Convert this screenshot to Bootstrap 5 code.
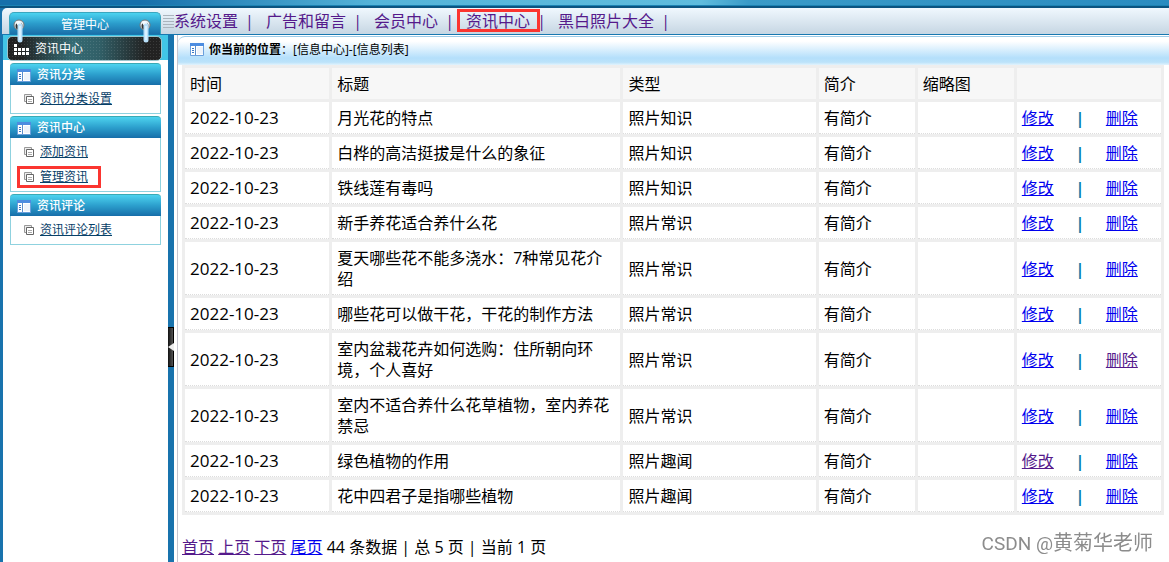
<!DOCTYPE html>
<html lang="zh-CN">
<head>
<meta charset="utf-8">
<meta name="viewport" content="width=device-width, initial-scale=1">
<title>管理中心</title>
<link href="https://cdn.jsdelivr.net/npm/bootstrap@5.3.0/dist/css/bootstrap.min.css" rel="stylesheet">
<style>
body{font-family:"Open Sans","Noto Sans CJK SC",sans-serif;font-size:16px;line-height:21px;color:#000;background:#1873ad}
a{color:#00e}
a.seen{color:#551a8b}
.top-strip{height:8px;background:linear-gradient(#0000 5px,#1c83b3 5px,#1c83b3 6px,#0b5480 6px),linear-gradient(90deg,#1670ab 12%,#55b4d9 32%,#5fbcdd 60%,#3a9bc8 64%,#2a8cc0)}
.main-nav{height:27px;margin-left:2px;background:linear-gradient(#f0f8fe,#c6d6e3);border-bottom:1px solid #1878b0;border-top-left-radius:5px}
.side-title{width:152px;height:22px;margin:4px 0 0 7px;line-height:24px;font-size:12px;color:#fff;background:linear-gradient(#4bd3f0,#2b9ccb 50%,#1a70aa);border:1px solid #3aa6bf;border-bottom:0;border-radius:5px 5px 0 0}
.stripes{width:11px;height:13px;margin:7px 0 0 2px;background:repeating-linear-gradient(#aab4bd 0 1px,#0000 1px 3px)}
.menu-links{color:#551a8b;line-height:27px}
.bar-sep{width:23px;margin-right:5px;text-align:center}
.boxed{position:relative}
.boxed::after{content:"";position:absolute;inset:1px -10px 2px -9px;border:3px solid #fb3530}
.sidebar{width:165px;margin-left:3px;background:#fff}
.side-head{height:25px;margin-bottom:3px;padding:1px 6px 0 4px;background:#41c5e6}
.dark-bar{height:25px;padding-left:6px;gap:6px;font-size:12px;color:#fff;border:1px solid #9cc4cc;border-radius:5px;background:radial-gradient(#ffffff1c 1px,#0000 1px) 0 0/3px 3px,linear-gradient(90deg,#222 8%,#356b74 42%,#315f67 60%,#222 90%)}
.ring{position:absolute;top:18px;z-index:2}
.ring-l{left:12px}
.ring-r{left:138px}
.group{margin:0 7px 2px;font-size:12px}
.group-head{height:22px;margin:0;padding:1px 0 0 7px;gap:6px;font-size:12px;color:#fff;border-top:1px solid #3aa9b5;border-radius:4px 4px 0 0;background:linear-gradient(#4dd3ef,#2c9fcd 50%,#176ea9)}
.group-body{margin:0;padding:1px 0 2px 6px;border:1px solid #8fd2df;border-top:0}
.group-body li{height:25px}
.group-body a{height:22px;padding:0 10px 0 4px;gap:6px;border:3px solid #0000;color:#074068}
.group-body a.picked{border-color:#fb3530}
.splitter{width:6px;padding-top:292px}
.handle{width:6px;height:40px;padding:0;border:1px solid #000;border-left:0;background:linear-gradient(90deg,#111,#555)}
.content-pane{background:#fff;padding-left:3px}
.pane-inner{border-left:1px solid #c5c5cf}
.crumbs{height:29px;margin-top:1px;padding-left:12px;gap:5px;font-size:12px;line-height:18px;padding-bottom:3px;border-top:1px solid #9dcbe8;border-top-left-radius:7px;background:linear-gradient(#fff 15%,#b4dffb 75%,#bce3fa 90%,#e2f3fd)}
.grid-wrap{padding:0 5px 0 4px}
.news{width:100%;table-layout:fixed;border-collapse:separate;border-spacing:3px;background:#eee}
.news th{font-weight:400;background:#f7f7f7;padding:6px 5px 4px;height:31px}
.news td{background:#fff;padding:6px 5px 4px;border-bottom:1px dotted #ddd}
.news td.day{font-size:17px;padding:5px}
.op-sep{display:inline-block;width:52px;text-align:center;color:#087da8;font-weight:700}
.pager{margin-top:22px;padding-left:4px}
.watermark{position:fixed;right:16px;bottom:8px;font-size:20px;color:#8c8c8c}
.watermark span{font-family:Roboto,sans-serif;font-size:19px}
</style>
</head>
<body>
<svg class="d-none" aria-hidden="true">
  <symbol id="panel" viewBox="0 0 14 13"><path d="M.5 1h13v11.500H.5z" fill="#fff" stroke="#6a9fdc"/><path d="M0 0h14v3H0z" fill="#4c8ce0"/><path d="M5.500 3v9" stroke="#5b8ecb"/><path d="M2 5.500h2M2 7.500h2M2 9.500h2" stroke="#3b78c4"/><path d="M7 4h6v7H7z" fill="#eef3fa"/></symbol>
  <symbol id="pages" viewBox="0 0 10 10"><path d="M.5.5h7v7h-7z" fill="#eee" stroke="#999"/><path d="M2.500 2.500h7v7h-7z" fill="#fff" stroke="#666"/><path d="M4 5.500h4M4 7.500h4" stroke="#aaa"/></symbol>
  <symbol id="ringpic" viewBox="0 0 14 26"><circle cx="7" cy="7" r="5" fill="#e8f2f6" stroke="#777" stroke-width="1"/><circle cx="7" cy="8" r="3.500" fill="#333"/><path d="M4.500 5.500Q8 3.500 8 9V21" fill="none" stroke="#f5fbff" stroke-width="4"/><path d="M8 8v14" stroke="#b9e0fa" stroke-width="5" stroke-linecap="round"/><path d="M8 8v14" stroke="#d9f1ff" stroke-width="2"/></symbol>
</svg>
<div class="d-flex flex-column min-vh-100 position-relative">
  <svg class="ring ring-l" width="14" height="26"><use href="#ringpic"/></svg>
  <svg class="ring ring-r" width="14" height="26"><use href="#ringpic"/></svg>
  <div class="top-strip"></div>
  <header class="main-nav d-flex">
    <div class="side-title text-center flex-shrink-0">管理中心</div>
    <div class="stripes flex-shrink-0"></div>
    <nav class="menu-links d-flex text-nowrap">
      <a class="seen text-decoration-none" href="#">系统设置</a><span class="bar-sep">|</span>
      <a class="seen text-decoration-none" href="#">广告和留言</a><span class="bar-sep">|</span>
      <a class="seen text-decoration-none" href="#">会员中心</a><span class="bar-sep">|</span>
      <a class="seen text-decoration-none boxed" href="#">资讯中心</a><span class="bar-sep">|</span>
      <a class="seen text-decoration-none" href="#">黑白照片大全</a><span class="bar-sep">|</span>
    </nav>
  </header>
  <div class="d-flex flex-grow-1">
    <aside class="sidebar flex-shrink-0">
      <div class="side-head">
        <div class="dark-bar d-flex align-items-center">
          <svg width="15" height="12" viewBox="0 0 15 12" fill="#fff"><path d="M0 1h3v3H0zM0 5h3v3H0zM4 5h3v3H4zM8 5h3v3H8zM12 5h3v3h-3zM0 9h3v3H0zM4 9h3v3H4zM8 9h3v3H8zM12 9h3v3h-3z"/></svg>资讯中心
        </div>
      </div>
      <section class="group">
        <h2 class="group-head d-flex align-items-center"><svg width="14" height="13"><use href="#panel"/></svg>资讯分类</h2>
        <ul class="group-body list-unstyled">
          <li class="d-flex align-items-center"><a class="d-inline-flex align-items-center" href="#"><svg width="10" height="10"><use href="#pages"/></svg><span>资讯分类设置</span></a></li>
        </ul>
      </section>
      <section class="group">
        <h2 class="group-head d-flex align-items-center"><svg width="14" height="13"><use href="#panel"/></svg>资讯中心</h2>
        <ul class="group-body list-unstyled">
          <li class="d-flex align-items-center"><a class="d-inline-flex align-items-center" href="#"><svg width="10" height="10"><use href="#pages"/></svg><span>添加资讯</span></a></li>
          <li class="d-flex align-items-center"><a class="picked d-inline-flex align-items-center" href="#"><svg width="10" height="10"><use href="#pages"/></svg><span>管理资讯</span></a></li>
        </ul>
      </section>
      <section class="group">
        <h2 class="group-head d-flex align-items-center"><svg width="14" height="13"><use href="#panel"/></svg>资讯评论</h2>
        <ul class="group-body list-unstyled">
          <li class="d-flex align-items-center"><a class="d-inline-flex align-items-center" href="#"><svg width="10" height="10"><use href="#pages"/></svg><span>资讯评论列表</span></a></li>
        </ul>
      </section>
    </aside>
    <div class="splitter flex-shrink-0">
      <button class="handle d-block" type="button" aria-label="收起菜单"><svg class="d-block" width="6" height="8" viewBox="0 0 6 8"><path d="M0 4l6-4v8z" fill="#eee"/></svg></button>
    </div>
    <main class="content-pane d-flex flex-grow-1">
      <div class="pane-inner flex-grow-1">
        <div class="crumbs d-flex align-items-center"><svg width="14" height="13"><use href="#panel"/></svg><div><b>你当前的位置</b>：[信息中心]-[信息列表]</div></div>
        <div class="grid-wrap">
          <table class="news">
            <colgroup><col style="width:15%"><col style="width:30%"><col style="width:20%"><col style="width:10%"><col style="width:10%"><col style="width:15%"></colgroup>
            <thead><tr><th>时间</th><th>标题</th><th>类型</th><th>简介</th><th>缩略图</th><th></th></tr></thead>
            <tbody>
              <tr><td class="day">2022-10-23</td><td>月光花的特点</td><td>照片知识</td><td>有简介</td><td></td><td><a href="#">修改</a><span class="op-sep">|</span><a href="#">删除</a></td></tr>
              <tr><td class="day">2022-10-23</td><td>白桦的高洁挺拔是什么的象征</td><td>照片知识</td><td>有简介</td><td></td><td><a href="#">修改</a><span class="op-sep">|</span><a href="#">删除</a></td></tr>
              <tr><td class="day">2022-10-23</td><td>铁线莲有毒吗</td><td>照片知识</td><td>有简介</td><td></td><td><a href="#">修改</a><span class="op-sep">|</span><a href="#">删除</a></td></tr>
              <tr><td class="day">2022-10-23</td><td>新手养花适合养什么花</td><td>照片常识</td><td>有简介</td><td></td><td><a href="#">修改</a><span class="op-sep">|</span><a href="#">删除</a></td></tr>
              <tr><td class="day">2022-10-23</td><td>夏天哪些花不能多浇水：7种常见花介绍</td><td>照片常识</td><td>有简介</td><td></td><td><a href="#">修改</a><span class="op-sep">|</span><a href="#">删除</a></td></tr>
              <tr><td class="day">2022-10-23</td><td>哪些花可以做干花，干花的制作方法</td><td>照片常识</td><td>有简介</td><td></td><td><a href="#">修改</a><span class="op-sep">|</span><a href="#">删除</a></td></tr>
              <tr><td class="day">2022-10-23</td><td>室内盆栽花卉如何选购：住所朝向环境，个人喜好</td><td>照片常识</td><td>有简介</td><td></td><td><a href="#">修改</a><span class="op-sep">|</span><a class="seen" href="#">删除</a></td></tr>
              <tr><td class="day">2022-10-23</td><td>室内不适合养什么花草植物，室内养花禁忌</td><td>照片常识</td><td>有简介</td><td></td><td><a href="#">修改</a><span class="op-sep">|</span><a href="#">删除</a></td></tr>
              <tr><td class="day">2022-10-23</td><td>绿色植物的作用</td><td>照片趣闻</td><td>有简介</td><td></td><td><a class="seen" href="#">修改</a><span class="op-sep">|</span><a href="#">删除</a></td></tr>
              <tr><td class="day">2022-10-23</td><td>花中四君子是指哪些植物</td><td>照片趣闻</td><td>有简介</td><td></td><td><a href="#">修改</a><span class="op-sep">|</span><a href="#">删除</a></td></tr>
            </tbody>
          </table>
        </div>
        <div class="pager"><a class="seen" href="#">首页</a> <a class="seen" href="#">上页</a> <a class="seen" href="#">下页</a> <a href="#">尾页</a> 44 条数据 | 总 5 页 | 当前 1 页</div>
      </div>
    </main>
  </div>
</div>
<div class="watermark"><span>CSDN @</span>黄菊华老师</div>
<script src="https://cdn.jsdelivr.net/npm/bootstrap@5.3.0/dist/js/bootstrap.bundle.min.js"></script>
</body>
</html>
